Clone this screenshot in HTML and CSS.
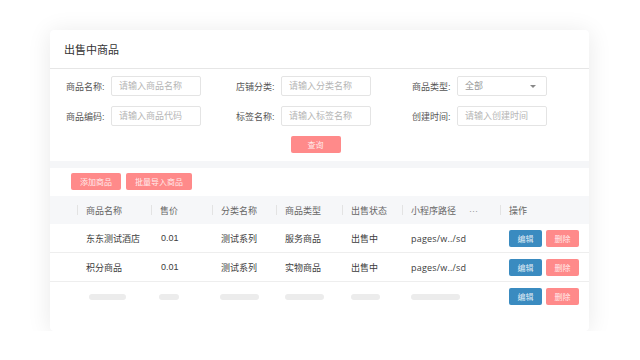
FILE: index.html
```html
<!DOCTYPE html>
<html lang="zh-CN">
<head>
    <meta charset="UTF-8">
    <meta name="viewport" content="width=device-width, initial-scale=1.0">
    <title>出售中商品</title>
    <link rel="stylesheet" href="styles.css">
</head>
<body>
    <div class="panel">
        <!-- Search card -->
        <section class="search-card">
            <div class="card-head">出售中商品</div>
            <div class="search-form">
                <div class="field">
                    <label>商品名称:</label>
                    <div class="input placeholder">请输入商品名称</div>
                </div>
                <div class="field">
                    <label>店铺分类:</label>
                    <div class="input placeholder">请输入分类名称</div>
                </div>
                <div class="field">
                    <label>商品类型:</label>
                    <div class="input select">
                        <span>全部</span>
                        <span class="caret"></span>
                    </div>
                </div>
                <div class="field">
                    <label>商品编码:</label>
                    <div class="input placeholder">请输入商品代码</div>
                </div>
                <div class="field">
                    <label>标签名称:</label>
                    <div class="input placeholder">请输入标签名称</div>
                </div>
                <div class="field">
                    <label>创建时间:</label>
                    <div class="input placeholder">请输入创建时间</div>
                </div>
            </div>
            <div class="search-actions">
                <button class="btn btn-red btn-query">查询</button>
            </div>
        </section>

        <!-- List card -->
        <section class="list-card">
            <div class="toolbar">
                <button class="btn btn-red btn-add">添加商品</button>
                <button class="btn btn-red btn-import">批量导入商品</button>
            </div>
            <table class="goods-table">
                <colgroup>
                    <col style="width:27px">
                    <col style="width:74px">
                    <col style="width:61px">
                    <col style="width:64px">
                    <col style="width:66px">
                    <col style="width:60px">
                    <col style="width:98px">
                    <col style="width:89px">
                </colgroup>
                <thead>
                    <tr>
                        <th></th>
                        <th class="sep">商品名称</th>
                        <th class="sep">售价</th>
                        <th class="sep">分类名称</th>
                        <th class="sep">商品类型</th>
                        <th class="sep">出售状态</th>
                        <th class="sep">小程序路径<span class="more">···</span></th>
                        <th class="sep">操作</th>
                    </tr>
                </thead>
                <tbody>
                    <tr>
                        <td></td>
                        <td>东东测试酒店</td>
                        <td class="num">0.01</td>
                        <td>测试系列</td>
                        <td>服务商品</td>
                        <td>出售中</td>
                        <td class="path">pages/w../sd</td>
                        <td class="ops">
                            <button class="btn btn-blue">编辑</button>
                            <button class="btn btn-red">删除</button>
                        </td>
                    </tr>
                    <tr>
                        <td></td>
                        <td>积分商品</td>
                        <td class="num">0.01</td>
                        <td>测试系列</td>
                        <td>实物商品</td>
                        <td>出售中</td>
                        <td class="path">pages/w../sd</td>
                        <td class="ops">
                            <button class="btn btn-blue">编辑</button>
                            <button class="btn btn-red">删除</button>
                        </td>
                    </tr>
                    <tr class="loading">
                        <td></td>
                        <td><span class="skeleton sk-name"></span></td>
                        <td><span class="skeleton sk-price"></span></td>
                        <td><span class="skeleton sk-cat"></span></td>
                        <td><span class="skeleton sk-type"></span></td>
                        <td><span class="skeleton sk-state"></span></td>
                        <td><span class="skeleton sk-path"></span></td>
                        <td class="ops">
                            <button class="btn btn-blue">编辑</button>
                            <button class="btn btn-red">删除</button>
                        </td>
                    </tr>
                </tbody>
            </table>
        </section>
    </div>
</body>
</html>
```

FILE: styles.css
```css
/* General Styles */
body {
    margin: 0;
    padding: 30px 0 0 50px;
    background-color: #ffffff;
    font-family: "Liberation Sans", "Noto Sans CJK SC", sans-serif;
    color: #333333;
    font-size: 9px;
}

.panel {
    width: 539px;
    display: flex;
    flex-direction: column;
    gap: 7px;
    background-color: #f5f6f8;
    border-radius: 4px;
    overflow: hidden;
    box-shadow: 0 2px 24px rgba(0, 0, 0, 0.09);
}

.search-card,
.list-card {
    background-color: #ffffff;
}

.card-head {
    height: 38px;
    line-height: 40px;
    padding-left: 14px;
    font-size: 11px;
    color: #333333;
    border-bottom: 1px solid #e6e6e6;
}

/* Search form */
.search-form {
    display: grid;
    grid-template-columns: 170px 176px 1fr;
    row-gap: 10px;
    padding: 7px 0 0 16px;
}

.field {
    display: flex;
    align-items: center;
}

.field label {
    width: 45px;
    color: #555555;
}

.input {
    box-sizing: border-box;
    width: 90px;
    height: 20px;
    line-height: 18px;
    padding: 0 7px;
    border: 1px solid #e4e4e4;
    border-radius: 2px;
    color: #999999;
}

.placeholder {
    color: #b5b5b5;
}

.select {
    display: flex;
    justify-content: space-between;
    align-items: center;
}

.caret {
    width: 0;
    height: 0;
    border-left: 3px solid transparent;
    border-right: 3px solid transparent;
    border-top: 3px solid #888888;
    margin-right: 3px;
}

.search-actions {
    display: flex;
    justify-content: center;
    padding: 10px 8px 8px 0;
}

/* Buttons */
.btn {
    box-sizing: border-box;
    height: 17px;
    padding: 0;
    border: none;
    border-radius: 2px;
    font-family: "Liberation Sans", "Noto Sans CJK SC", sans-serif;
    font-size: 8px;
    color: rgba(255, 255, 255, 0.85);
    cursor: pointer;
}

.btn-red {
    background-color: #ff8a8a;
}

.btn-blue {
    background-color: #3a8bc0;
}

.btn-query {
    width: 50px;
}

.btn-add {
    width: 50px;
}

.btn-import {
    width: 66px;
}

/* List */
.list-card {
    padding-bottom: 20px;
}

.toolbar {
    display: flex;
    gap: 5px;
    padding: 5px 0 6px 21px;
}

.goods-table {
    width: 539px;
    table-layout: fixed;
    border-collapse: collapse;
}

.goods-table th {
    position: relative;
    height: 28px;
    padding: 0 9px;
    background-color: #f6f7f9;
    color: #666666;
    font-weight: normal;
    text-align: left;
    white-space: nowrap;
}

.goods-table th.sep::before {
    content: "";
    position: absolute;
    left: 0;
    top: 9px;
    height: 10px;
    border-left: 1px solid #e3e3e3;
}

.more {
    margin-left: 13px;
    color: #999999;
}

.goods-table td {
    height: 28px;
    padding: 0 9px;
    color: #3c3c3c;
    border-bottom: 1px solid #eeeeee;
    white-space: nowrap;
}

.goods-table td.num {
    padding-left: 10px;
}

.goods-table td.path {
    font-family: "Open Sans", "Noto Sans CJK SC", sans-serif;
    letter-spacing: 0.2px;
}

.goods-table tr.loading td {
    border-bottom: none;
    height: 29px;
}

.goods-table td.ops {
    font-size: 0;
}

.goods-table td.ops .btn {
    width: 33px;
    margin-right: 4px;
}

/* Skeleton placeholders */
.skeleton {
    display: block;
    height: 6px;
    border-radius: 3px;
    background-color: #ececec;
}

.sk-name { width: 37px; margin-left: 3px; }
.sk-price { width: 20px; margin-left: -1px; }
.sk-cat { width: 39px; margin-left: -1px; }
.sk-type { width: 39px; }
.sk-state { width: 29px; }
.sk-path { width: 49px; }
```
